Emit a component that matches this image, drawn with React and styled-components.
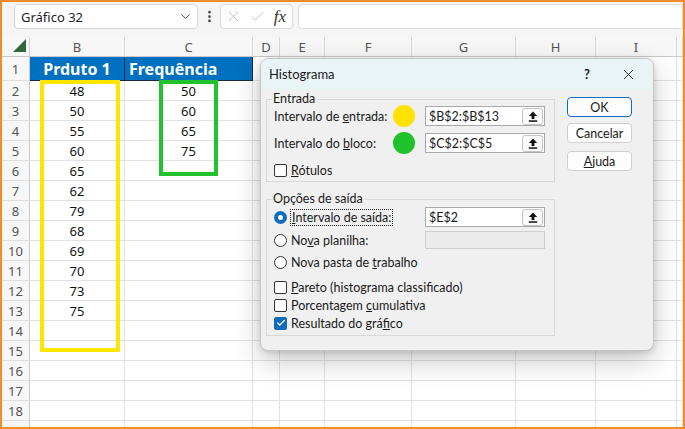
import React from 'react'
import styled, { createGlobalStyle } from 'styled-components'
import { ChevronDown, EllipsisVertical, X, Check } from 'lucide-react'

const COLS = '28px 95px 128px 27px 45px 87px 104px 80px 81px 1fr'
const LETTERS = ['B', 'C', 'D', 'E', 'F', 'G', 'H', 'I', '']
const PRODUCT = [48, 50, 55, 60, 65, 62, 79, 68, 69, 70, 73, 75]
const FREQ = [50, 60, 65, 75]

const GlobalStyle = createGlobalStyle`
  body{
    margin:0;
    background:#fff;
    font-family:"Noto Sans", "Open Sans", sans-serif;
  }
  *{ box-sizing:border-box; }
`

const App = () => {
  const rows = []
  for (let r = 1; r <= 19; r++) rows.push(r)

  return (
    <>
      <GlobalStyle />
      <Frame>
        <Toolbar>
          <NameBox>
            <span>Gráfico 32</span>
            <ChevronDown size={15} strokeWidth={1.6} color="#444" />
          </NameBox>
          <Dots><EllipsisVertical size={15} strokeWidth={2.4} color="#444" /></Dots>
          <FormulaTools>
            <X size={17} strokeWidth={1.2} color="#b8b8b8" />
            <Check size={17} strokeWidth={1.2} color="#b8b8b8" />
            <Fx>fx</Fx>
          </FormulaTools>
          <FormulaBar />
        </Toolbar>

        <Sheet>
          <Corner>
            <svg width="13" height="13" viewBox="0 0 13 13">
              <polygon points="13,0 13,13 0,13" fill="#2f6b3a" />
            </svg>
          </Corner>
          {LETTERS.map((l, i) => (
            <ColHead key={i}>{l}</ColHead>
          ))}
          {rows.map((r) => (
            <React.Fragment key={r}>
              {/* the last row only peeks out under the frame, its number is hidden */}
              <RowHead>{r < 19 ? r : ''}</RowHead>
              {r === 1 ? (
                <>
                  <TitleCell $center>Prduto 1</TitleCell>
                  <TitleCell>Frequência</TitleCell>
                </>
              ) : (
                <>
                  <Cell>{PRODUCT[r - 2]}</Cell>
                  <Cell>{FREQ[r - 2]}</Cell>
                </>
              )}
              {LETTERS.slice(2).map((l, i) => (
                <Cell key={i} />
              ))}
            </React.Fragment>
          ))}
        </Sheet>

        <RangeMark $color="#ffe600" $left={38} $top={78} $w={80} $h={272} />
        <RangeMark $color="#22c22e" $left={157} $top={78} $w={59} $h={96} />

        <Dialog>
          <TitleBar>
            <span>Histograma</span>
            <TitleTools>
              <Help>?</Help>
              <X size={17} strokeWidth={1.3} color="#222" />
            </TitleTools>
          </TitleBar>
          <Body>
            <Groups>
              <Group>
                <Legend>Entrada</Legend>
                <InputGrid>
                  <FieldLabel>Intervalo de <u>e</u>ntrada:</FieldLabel>
                  <Dot $color="#ffe100" />
                  <RefInput value="$B$2:$B$13" />
                  <FieldLabel>Intervalo do <u>b</u>loco:</FieldLabel>
                  <Dot $color="#1fc22b" />
                  <RefInput value="$C$2:$C$5" />
                </InputGrid>
                <OptionRow $mt={6}>
                  <Box />
                  <span><u>R</u>ótulos</span>
                </OptionRow>
              </Group>

              <Group $mt={9} $pb={3}>
                <Legend>Opções de saída</Legend>
                <OutputRow>
                  <OptionRow>
                    <Radio $on />
                    <Focus><u>I</u>ntervalo de saída:</Focus>
                  </OptionRow>
                  <RefInput value="$E$2" />
                </OutputRow>
                <OutputRow $mt={3}>
                  <OptionRow>
                    <Radio />
                    <span>No<u>v</u>a planilha:</span>
                  </OptionRow>
                  <DisabledInput />
                </OutputRow>
                <OptionRow $mt={2}>
                  <Radio />
                  <span>Nova pasta de <u>t</u>rabalho</span>
                </OptionRow>
                <Checks>
                  <OptionRow $h={18}>
                    <Box />
                    <span><u>P</u>areto (histograma classificado)</span>
                  </OptionRow>
                  <OptionRow $h={18}>
                    <Box />
                    <span>Porcentagem <u>c</u>umulativa</span>
                  </OptionRow>
                  <OptionRow $h={18}>
                    <Box $on><Check size={10} strokeWidth={3} color="#fff" /></Box>
                    <span>Resultado do grá<u>f</u>ico</span>
                  </OptionRow>
                </Checks>
              </Group>
            </Groups>

            <Buttons>
              <Btn $primary>OK</Btn>
              <Btn>Cancelar</Btn>
              <Btn $mt={2}><u>A</u>juda</Btn>
            </Buttons>
          </Body>
        </Dialog>
      </Frame>
    </>
  )
}

const RefInput = ({ value }) => (
  <InputBox>
    <span>{value}</span>
    <Collapse>
      <svg width="10" height="11" viewBox="0 0 10 11">
        <polygon points="5,0.5 0.8,5 9.2,5" fill="#111" />
        <rect x="3.6" y="4.5" width="2.8" height="3.6" fill="#111" />
        <rect x="0.8" y="9.3" width="8.4" height="1.5" fill="#111" />
      </svg>
    </Collapse>
  </InputBox>
)

export default App

const Frame = styled.div`
    position:relative;
    width:685px;
    height:429px;
    border:2px solid #f08c2a;
    overflow:hidden;
    background:#fff;
`;
const Toolbar = styled.div`
    height:35px;
    display:flex;
    align-items:flex-start;
    padding:2px 0 0 12px;
    background:#f5f5f5;
`;
const NameBox = styled.div`
    width:184px;
    height:25px;
    display:flex;
    align-items:center;
    justify-content:space-between;
    padding:0 4px 0 6px;
    background:#fff;
    border:1px solid #d6d6d6;
    border-radius:4px;
    font-size:13px;
    color:#222;
`;
const Dots = styled.div`
    width:22px;
    height:25px;
    display:flex;
    align-items:center;
    justify-content:center;
`;
const FormulaTools = styled.div`
    width:73px;
    height:25px;
    display:flex;
    align-items:center;
    justify-content:space-between;
    padding:0 4px 0 4px;
    background:#fff;
    border:1px solid #dcdcdc;
    border-radius:4px;
`;
const Fx = styled.span`
    font-family:"Liberation Serif", serif;
    font-style:italic;
    font-size:17px;
    color:#333;
    margin-right:2px;
`;
const FormulaBar = styled.div`
    flex:1;
    height:25px;
    margin-left:5px;
    background:#fff;
    border:1px solid #dcdcdc;
    border-radius:4px 0 0 4px;
`;
const Sheet = styled.div`
    display:grid;
    grid-template-columns:${COLS};
    grid-template-rows:20px 24px;
    grid-auto-rows:20px;
    font-size:13px;
    color:#111;
`;
const Corner = styled.div`
    display:flex;
    align-items:flex-end;
    justify-content:flex-end;
    padding:0 3px 4px 0;
    background:#f7f7f7;
    border-right:1px solid #d4d4d4;
    border-bottom:1px solid #c8c8c8;
`;
const ColHead = styled.div`
    display:flex;
    align-items:center;
    justify-content:center;
    background:#f7f7f7;
    color:#555;
    border-right:1px solid #d8d8d8;
    border-bottom:1px solid #c8c8c8;
`;
const RowHead = styled.div`
    display:flex;
    align-items:center;
    justify-content:center;
    background:#f7f7f7;
    color:#555;
    border-right:1px solid #c8c8c8;
    border-bottom:1px solid #dedede;
`;
const Cell = styled.div`
    display:flex;
    align-items:center;
    justify-content:center;
    border-right:1px solid #e2e2e2;
    border-bottom:1px solid #e2e2e2;
`;
const TitleCell = styled.div`
    display:flex;
    align-items:center;
    justify-content:${(p) => (p.$center ? 'center' : 'flex-start')};
    padding-left:${(p) => (p.$center ? '0' : '4px')};
    background:#0070c0;
    color:#fff;
    font-weight:700;
    font-size:16px;
    border-right:1px solid #1b2a3a;
    border-bottom:1px solid #1b2a3a;
`;
const RangeMark = styled.div`
    position:absolute;
    left:${(p) => p.$left}px;
    top:${(p) => p.$top}px;
    width:${(p) => p.$w}px;
    height:${(p) => p.$h}px;
    border:4px solid ${(p) => p.$color};
    pointer-events:none;
`;
const Dialog = styled.div`
    position:absolute;
    left:258px;
    top:56px;
    width:394px;
    height:293px;
    background:#f0f0f0;
    border:1px solid #c4c4c4;
    border-radius:8px;
    overflow:hidden;
    box-shadow:0 10px 28px rgba(0,0,0,0.22), 0 2px 6px rgba(0,0,0,0.12);
    font-family:Lato, "Noto Sans", sans-serif;
    font-size:12.5px;
    color:#1a1a1a;
`;
const TitleBar = styled.div`
    height:30px;
    display:flex;
    align-items:center;
    justify-content:space-between;
    padding:0 16px 0 8px;
    background:#e9f4f7;
    font-size:13px;
`;
const TitleTools = styled.div`
    display:flex;
    align-items:center;
    gap:30px;
`;
const Help = styled.span`
    font-size:13px;
    font-weight:700;
`;
const Body = styled.div`
    display:flex;
    gap:12px;
    padding:2px 0 0 5px;
`;
const Groups = styled.div`
    width:289px;
`;
const Group = styled.fieldset`
    margin:${(p) => p.$mt || 0}px 0 0 0;
    padding:0 9px ${(p) => p.$pb || 1}px 7px;
    border:1px solid #d9d9d9;
    min-width:0;
`;
const Legend = styled.legend`
    padding:0 1px;
    margin-left:-2px;
    line-height:16px;
`;
const InputGrid = styled.div`
    margin-top:-2px;
    display:grid;
    grid-template-columns:119px 22px 120px;
    row-gap:5px;
    align-items:center;
    & > :nth-child(3n){ margin-left:10px; width:120px; }
`;
const FieldLabel = styled.span`
    white-space:nowrap;
`;
const Dot = styled.span`
    width:22px;
    height:22px;
    border-radius:50%;
    background:${(p) => p.$color};
`;
const InputBox = styled.div`
    height:20px;
    display:flex;
    align-items:center;
    justify-content:space-between;
    padding:0 1px 0 3px;
    background:#fff;
    border:1px solid #a9a9a9;
`;
const Collapse = styled.span`
    width:21px;
    height:17px;
    display:flex;
    align-items:center;
    justify-content:center;
    background:#fbfbfb;
    border:1px solid #c4c4c4;
    border-radius:3px;
`;
const DisabledInput = styled.div`
    height:18px;
    background:#ebebeb;
    border:1px solid #cfcfcf;
`;
const OutputRow = styled.div`
    margin-top:${(p) => p.$mt || 0}px;
    display:grid;
    grid-template-columns:151px 120px;
    align-items:center;
    min-height:20px;
`;
const OptionRow = styled.div`
    margin-top:${(p) => p.$mt || 0}px;
    height:${(p) => p.$h || 20}px;
    display:flex;
    align-items:center;
    gap:4px;
    white-space:nowrap;
`;
const Checks = styled.div`
    margin-top:6px;
    display:flex;
    flex-direction:column;
`;
const Box = styled.span`
    width:13px;
    height:13px;
    display:flex;
    align-items:center;
    justify-content:center;
    border:1px solid ${(p) => (p.$on ? '#0f6cbd' : '#333')};
    border-radius:2px;
    background:${(p) => (p.$on ? '#0f6cbd' : '#fff')};
`;
const Radio = styled.span`
    width:13px;
    height:13px;
    border-radius:50%;
    border:${(p) => (p.$on ? '4px solid #0f6cbd' : '1px solid #333')};
    background:#fff;
`;
const Focus = styled.span`
    outline:1px dotted #222;
    outline-offset:0;
    padding:0 1px;
`;
const Buttons = styled.div`
    width:65px;
    padding-top:6px;
    display:flex;
    flex-direction:column;
    gap:6px;
`;
const Btn = styled.div`
    margin-top:${(p) => p.$mt || 0}px;
    height:20px;
    display:flex;
    align-items:center;
    justify-content:center;
    background:#fdfdfd;
    border:${(p) => (p.$primary ? '1.5px solid #0f6cbd' : '1px solid #cfcfcf')};
    border-radius:4px;
`;
